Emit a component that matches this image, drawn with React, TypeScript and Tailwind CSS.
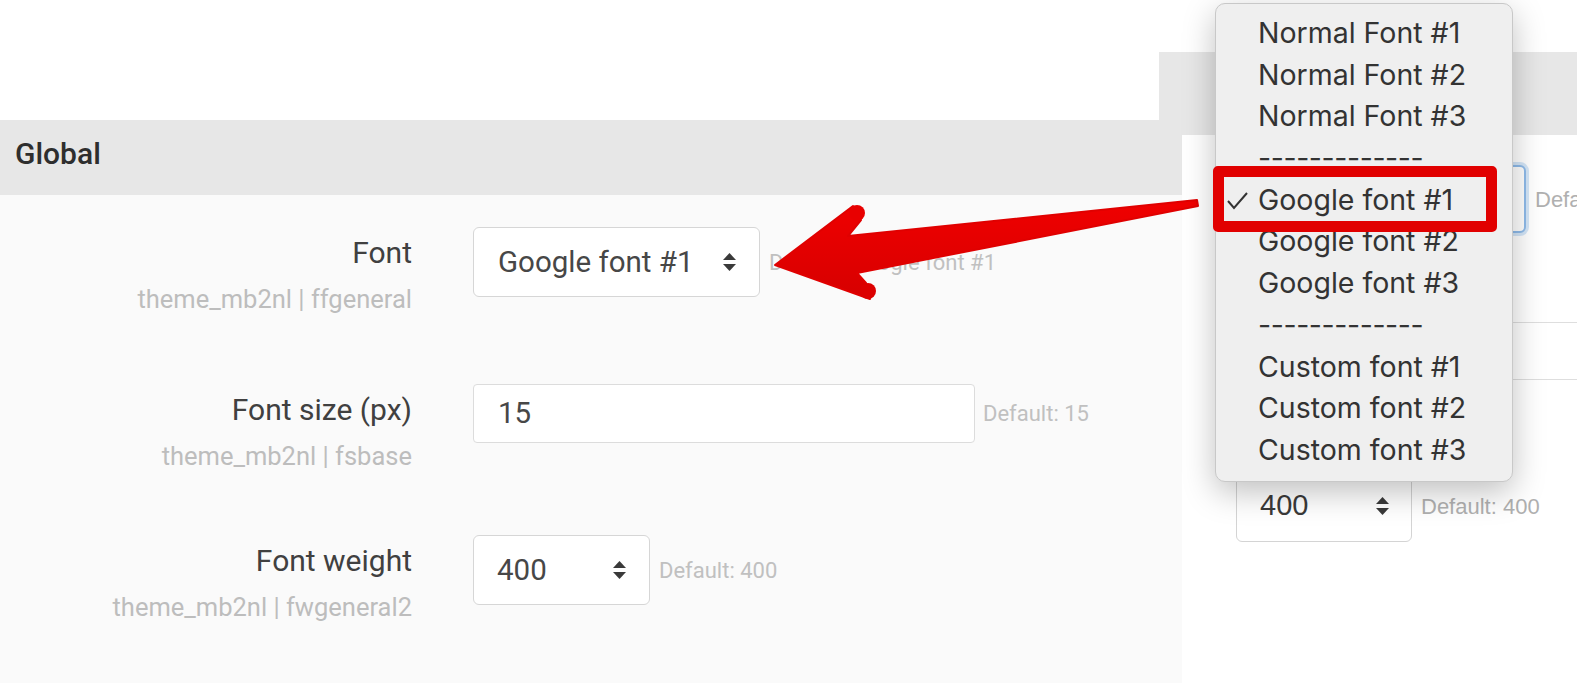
import type { ReactNode } from "react";

const MENU_ITEMS = [
  "Normal Font #1",
  "Normal Font #2",
  "Normal Font #3",
  "-------------",
  "Google font #1",
  "Google font #2",
  "Google font #3",
  "-------------",
  "Custom font #1",
  "Custom font #2",
  "Custom font #3",
];

function UpDown({ className = "" }: { className?: string }) {
  return (
    <svg width="15" height="20" viewBox="0 0 15 20" className={className}>
      <polygon points="7.5,1 14,8 1,8" fill="#3a3a3a" />
      <polygon points="1,12 14,12 7.5,19" fill="#3a3a3a" />
    </svg>
  );
}

function Row({
  label,
  sub,
  className,
  children,
}: {
  label: string;
  sub: string;
  className: string;
  children: ReactNode;
}) {
  return (
    <div className={`flex items-start ${className}`}>
      <div className="w-[412px] shrink-0 text-right pt-[8px]">
        <div className="text-[30px] leading-[36px] text-[#404040]">{label}</div>
        <div className="mt-[12px] text-[25.5px] leading-[32px] text-[#bdbdbd]">{sub}</div>
      </div>
      <div className="ml-[61px] flex items-center whitespace-nowrap">{children}</div>
    </div>
  );
}

export default function App() {
  return (
    <div className="relative w-full h-[683px] overflow-hidden bg-white font-['Roboto',sans-serif]">
      {/* left settings page */}
      <div className="h-[120px] bg-white" />
      <div className="h-[75px] bg-[#e7e7e7] flex items-center pl-[15px] pb-[8px]">
        <h3 className="text-[30px] font-medium text-[#2e2e2e]">Global</h3>
      </div>
      <div className="h-[488px] bg-[#fafafa] pt-[32px]">
        <Row label="Font" sub="theme_mb2nl | ffgeneral" className="">
          <div className="w-[287px] h-[70px] bg-white border border-[#d6d6d6] rounded-[6px] flex items-center justify-between pl-[24px] pr-[22px] text-[29.5px] text-[#474747]">
            <span>Google font #1</span>
            <UpDown />
          </div>
          <span className="ml-[9px] text-[22px] text-[#c0c0c0]">Default: Google font #1</span>
        </Row>
        <Row label="Font size (px)" sub="theme_mb2nl | fsbase" className="mt-[69px]">
          <div className="w-[502px] h-[59px] bg-white border border-[#dcdcdc] rounded-[4px] flex items-center pl-[24px] text-[29.5px] text-[#474747]">
            15
          </div>
          <span className="ml-[8px] text-[22px] text-[#c0c0c0]">Default: 15</span>
        </Row>
        <Row label="Font weight" sub="theme_mb2nl | fwgeneral2" className="mt-[63px]">
          <div className="w-[177px] h-[70px] bg-white border border-[#d6d6d6] rounded-[6px] flex items-center justify-between pl-[23px] pr-[22px] text-[29.5px] text-[#474747]">
            <span>400</span>
            <UpDown />
          </div>
          <span className="ml-[9px] text-[22px] text-[#c0c0c0]">Default: 400</span>
        </Row>
      </div>

      {/* second screenshot pasted over the right side */}
      <div className="absolute left-[1159px] top-[52px] right-0 bottom-0 flex flex-col font-['Liberation_Sans',sans-serif]">
        <div className="h-[83px] bg-[#e7e7e7]" />
        <div className="flex-1 flex">
          <div className="w-[23px] shrink-0" />
          <div className="flex-1 bg-white pl-[54px] pt-[30px] whitespace-nowrap">
            <div className="flex items-center">
              <div className="w-[290px] h-[68px] shrink-0 bg-white border-2 border-[#8fbbea] rounded-[6px] shadow-[0_0_0_3px_rgba(160,200,240,0.45)]" />
              <span className="ml-[9px] text-[22px] text-[#b0b0b0]">Default: Google font #1</span>
            </div>
            <div className="mt-[89px] w-[600px] h-[58px] border border-[#dedede] rounded-[4px]" />
            <div className="mt-[90px] flex items-center">
              <div className="w-[176px] h-[72px] shrink-0 bg-white border border-[#d4d4d4] rounded-[6px] flex items-center justify-between pl-[23px] pr-[21px] text-[29px] text-[#3a3a3a]">
                <span>400</span>
                <UpDown />
              </div>
              <span className="ml-[9px] text-[22px] text-[#b0b0b0]">Default: 400</span>
            </div>
          </div>
        </div>
      </div>

      {/* red annotation arrow */}
      <svg className="absolute inset-0 pointer-events-none" width="1577" height="683">
        <defs>
          <linearGradient id="arrowFill" x1="0" y1="0" x2="0" y2="1">
            <stop offset="0" stopColor="#f00000" />
            <stop offset="1" stopColor="#d60000" />
          </linearGradient>
        </defs>
        <polygon
          points="775,265 853,206 861,220 848,236 1197,200 1198,206 857,273 866,283 870,299"
          fill="url(#arrowFill)"
          stroke="#e00000"
          strokeWidth="2"
          strokeLinejoin="round"
        />
        <circle cx="857" cy="213" r="8" fill="#e80000" />
        <circle cx="868" cy="291" r="8" fill="#dc0000" />
      </svg>

      {/* open native dropdown */}
      <div className="absolute left-[1215px] top-[3px] w-[298px] h-[479px] bg-[#efefef] border border-[#c8c8c8] rounded-[10px] shadow-[0_10px_32px_rgba(0,0,0,0.25)] pt-[8px] font-['Inter',sans-serif] text-[28.5px] text-[#333333]">
        {MENU_ITEMS.map((item, i) => (
          <div key={i} className="relative h-[41.7px] leading-[41.7px] pl-[42px] whitespace-nowrap">
            {i === 4 && (
              <svg width="21" height="18" viewBox="0 0 21 18" className="absolute left-[11px] top-[13px]">
                <polyline points="1,9 7,16 20,1" fill="none" stroke="#333333" strokeWidth="2" />
              </svg>
            )}
            {item.startsWith("-") ? <span className="tracking-[-0.4px]">{item}</span> : item}
          </div>
        ))}
      </div>

      {/* red highlight box */}
      <div className="absolute left-[1213px] top-[166px] w-[284px] h-[66px] border-[11px] border-[#e10000] rounded-[5px]" />
    </div>
  );
}
